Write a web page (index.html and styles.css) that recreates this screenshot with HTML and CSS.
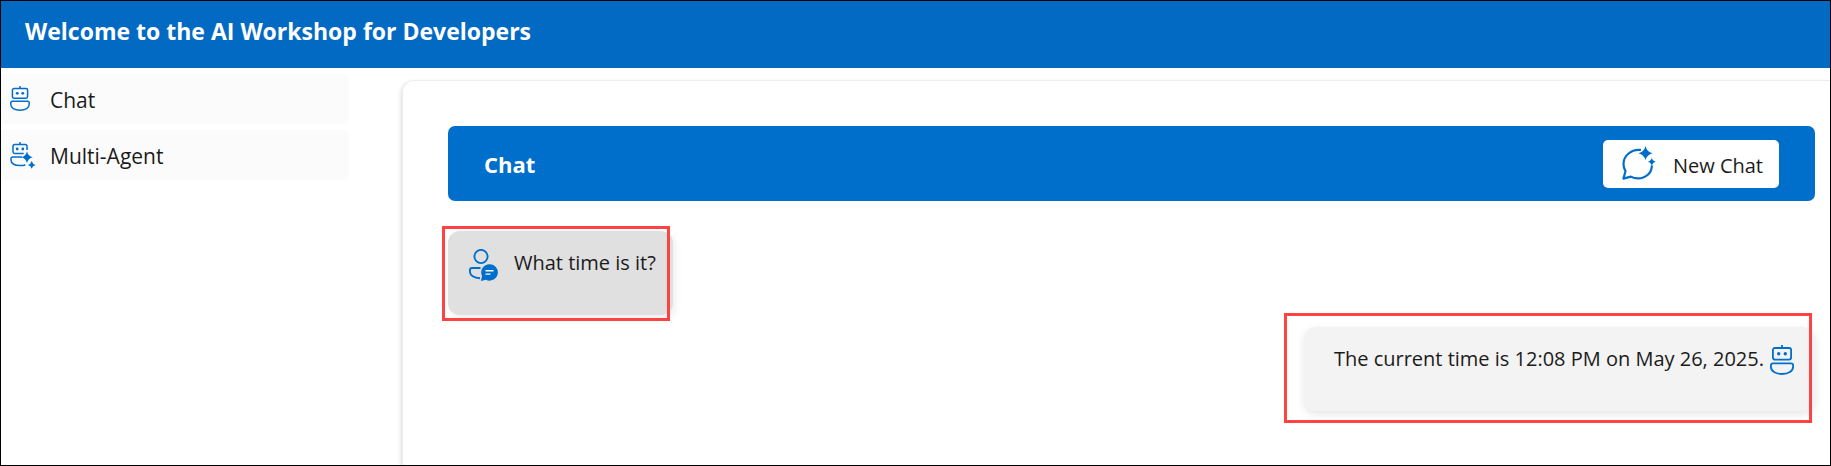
FILE: index.html
```html
<!DOCTYPE html>
<html lang="en">
<head>
<meta charset="utf-8">
<title>AI Workshop for Developers</title>
<link rel="stylesheet" href="styles.css">
</head>
<body>
<svg class="defs" aria-hidden="true">
  <symbol id="bot" viewBox="0 0 24 30">
    <g fill="none" stroke="currentColor" stroke-width="1.8">
      <rect x="2.9" y="3" width="18.2" height="11.6" rx="2"/>
      <path d="M12 0v3" stroke-linecap="butt"/>
      <path d="M3 18.4h18q2.1 0 2.1 2.1v1.2c0 4.4-4.600 7.300-11.100 7.300S.9 26.100.9 21.700v-1.200q0-2.100 2.100-2.100z"/>
    </g>
    <circle cx="8.700" cy="8.800" r="1.700" fill="currentColor"/>
    <circle cx="15.300" cy="8.800" r="1.700" fill="currentColor"/>
  </symbol>
</svg>
<div class="app">
  <header class="topbar"><h1 class="topbar-title">Welcome to the AI Workshop for Developers</h1></header>
  <div class="body">
    <nav class="sidebar">
      <a class="nav-item" href="#chat">
        <svg class="nav-icon" viewBox="0 0 26 30"><use href="#bot" width="20" height="25" y="1"/></svg>
        <span>Chat</span>
      </a>
      <a class="nav-item" href="#multi-agent">
        <svg class="nav-icon" viewBox="0 0 26 30">
          <g fill="none" stroke="currentColor" stroke-width="1.500">
            <path d="M10 1v2.500M17 9V5.200q0-1.700-1.700-1.700H4.700q-1.700 0-1.700 1.700v5.600q0 1.700 1.700 1.700h9"/>
            <path d="M12 16H2.800Q1 16 1 17.800v1c0 3.800 4 5.800 9.400 5.800 2 0 3.600-.3 5-.9"/>
          </g>
          <circle cx="7.200" cy="8" r="1.400" fill="currentColor"/>
          <circle cx="12.800" cy="8" r="1.400" fill="currentColor"/>
          <path fill="currentColor" d="M17 10.500Q18.200 15 22.700 16.200 18.200 17.400 17 21.900 15.800 17.400 11.300 16.200 15.800 15 17 10.500zM21.700 20Q22.500 23.200 25.600 23.900 22.500 24.600 21.700 27.800 20.900 24.600 17.800 23.900 20.900 23.200 21.700 20z"/>
        </svg>
        <span>Multi-Agent</span>
      </a>
    </nav>
    <main class="panel">
      <div class="chat-header">
        <h2 class="chat-title">Chat</h2>
        <button class="new-chat" type="button">
          <svg class="new-chat-icon" viewBox="0 0 34 34">
            <path fill="none" stroke="currentColor" stroke-width="2.200" stroke-linejoin="round" stroke-linecap="round" d="M18 3.900C9.500 3.200 1.500 9.500 1.500 18c0 2.800.8 5 2 7.200L1.400 32.600l7.400-2c2.200 1.200 4.400 1.800 7.200 1.800 7.500 0 13.400-5 13.800-12"/>
            <path fill="currentColor" d="M23.500 0Q25 6 30.500 7.300 25 8.600 23.500 14.300 22 8.600 16.500 7.300 22 6 23.500 0zM29.800 11.800Q30.500 15 34 15.800 30.500 16.600 29.800 20 29.100 16.600 25.700 15.800 29.100 15 29.800 11.800z"/>
          </svg>
          <span class="new-chat-label">New Chat</span>
        </button>
      </div>
      <div class="message message-user">
        <svg class="user-icon" viewBox="0 0 29 32">
          <circle cx="12" cy="7.500" r="6.600" fill="none" stroke="currentColor" stroke-width="1.900"/>
          <path d="M11.500 19H3.200Q.9 19 .9 21.200v1.200c0 4 4.200 6.800 10.100 6.800" fill="none" stroke="currentColor" stroke-width="1.900"/>
          <path d="M20.500 15.200a8.200 8.200 0 1 1-3.600 15.500l-5 1.200 1.100-5a8.200 8.200 0 0 1 7.500-11.700z" fill="currentColor"/>
          <path d="M16.500 21.700h8M16.500 25.100h5" stroke="#fff" stroke-width="1.400"/>
        </svg>
        <p class="message-text">What time is it?</p>
        <div class="highlight highlight-user"></div>
      </div>
      <div class="message message-bot">
        <p class="message-text">The current time is 12:08 PM on May 26, 2025.</p>
        <svg class="bot-icon" viewBox="0 0 24 30"><use href="#bot"/></svg>
        <div class="highlight highlight-bot"></div>
      </div>
    </main>
  </div>
</div>
</body>
</html>
```
FILE: styles.css
```css
* { box-sizing: border-box; }
body {
  margin: 0;
  font: 20px/28px "Open Sans", sans-serif;
  color: #1b1b1b;
  background: #fff;
}
h1, h2, p { margin: 0; }
.defs { position: absolute; width: 0; height: 0; }
.app {
  display: flex;
  flex-direction: column;
  min-height: 100vh;
  border: 1px solid #000;
}
.topbar { padding: 16px 24px 23px; background: #036ac4; }
.topbar-title { font-size: 23px; line-height: 28px; font-weight: 700; color: #fff; }
.body { flex: 1; display: flex; gap: 54px; }
.sidebar {
  flex: 0 0 348px;
  display: flex;
  flex-direction: column;
  gap: 6px;
  padding-top: 6px;
}
.nav-item {
  display: flex;
  align-items: center;
  gap: 14px;
  padding: 12px 9px 10px;
  border-radius: 0 6px 6px 0;
  background: #fbfbfb;
  color: inherit;
  font-size: 21px;
  text-decoration: none;
}
.nav-icon { width: 26px; height: 30px; margin: -1px 0; color: #036ecb; }
.panel {
  flex: 1;
  min-width: 0;
  display: flex;
  flex-direction: column;
  margin: 12px 0 0 -1px;
  padding: 45px 15px 20px 45px;
  border: solid #ececec;
  border-width: 1px 0 0 1px;
  border-radius: 12px 0 0 0;
  box-shadow: -1px 2px 4px rgba(0, 0, 0, 0.14);
  clip-path: inset(-6px 0 0 -10px);
}
.chat-header {
  display: flex;
  align-items: center;
  justify-content: space-between;
  padding: 14px 36px 13px;
  border-radius: 7px;
  background: #006ecb;
}
.chat-title { font-size: 22px; line-height: 28px; font-weight: 700; color: #fff; }
.new-chat {
  display: flex;
  align-items: flex-start;
  gap: 17px;
  padding: 6px 16px 8px 19px;
  border: 0;
  border-radius: 5px;
  background: #fff;
  font: inherit;
  color: inherit;
}
.new-chat-icon { width: 34px; height: 34px; color: #006ecb; }
.new-chat-label { padding-top: 6px; }
.message {
  position: relative;
  display: flex;
  align-items: flex-start;
  padding: 18px 16px 38px 21px;
  border-radius: 12px;
}
.message-user {
  align-self: flex-start;
  gap: 16px;
  margin-top: 30px;
  padding-right: 17px;
  background: #e0e0e0;
  box-shadow: 2px 3px 8px rgba(0, 0, 0, 0.08);
}
.message-bot {
  align-self: flex-end;
  gap: 6px;
  margin-top: 12px;
  padding-left: 30px;
  padding-right: 21px;
  background: #f3f3f3;
  box-shadow: 0 3px 8px rgba(0, 0, 0, 0.1);
}
.user-icon { width: 29px; height: 32px; margin-bottom: -4px; color: #006ecb; }
.bot-icon { width: 24px; height: 30px; margin-bottom: -2px; color: #006ecb; }
.highlight { position: absolute; border: 3px solid #ff4343; pointer-events: none; }
.highlight-user { inset: -5px 3px -6px -6px; }
.highlight-bot { inset: -14px 3px -12px -20px; }
```
